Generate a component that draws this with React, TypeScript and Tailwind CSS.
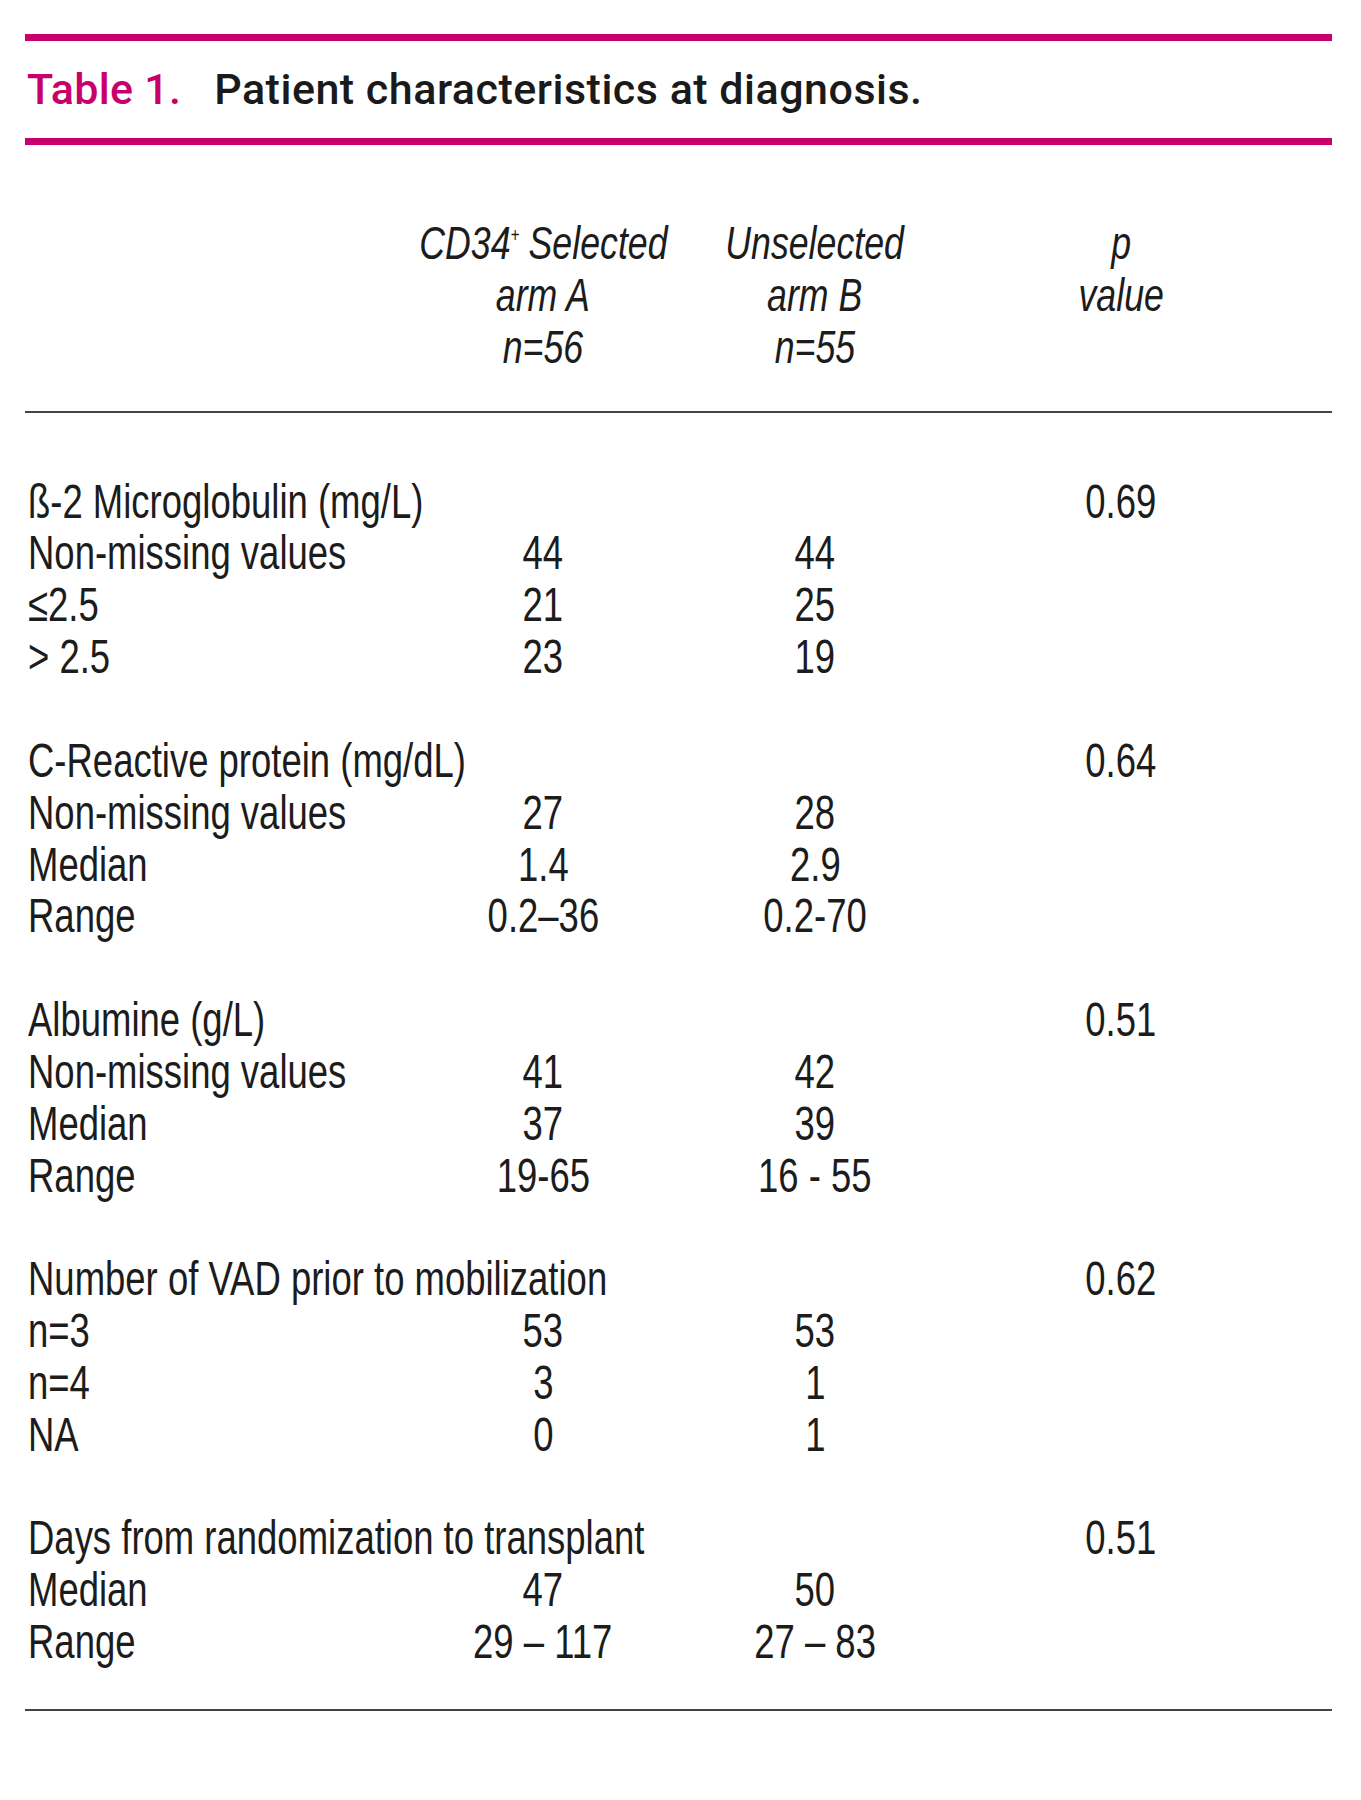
import React from "react";

type Group = { title: string; p: string; rows: [string, string, string][] };

const groups: Group[] = [
  {
    title: "ß-2 Microglobulin (mg/L)",
    p: "0.69",
    rows: [
      ["Non-missing values", "44", "44"],
      ["≤2.5", "21", "25"],
      ["> 2.5", "23", "19"],
    ],
  },
  {
    title: "C-Reactive protein (mg/dL)",
    p: "0.64",
    rows: [
      ["Non-missing values", "27", "28"],
      ["Median", "1.4", "2.9"],
      ["Range", "0.2–36", "0.2-70"],
    ],
  },
  {
    title: "Albumine (g/L)",
    p: "0.51",
    rows: [
      ["Non-missing values", "41", "42"],
      ["Median", "37", "39"],
      ["Range", "19-65", "16 - 55"],
    ],
  },
  {
    title: "Number of VAD prior to mobilization",
    p: "0.62",
    rows: [
      ["n=3", "53", "53"],
      ["n=4", "3", "1"],
      ["NA", "0", "1"],
    ],
  },
  {
    title: "Days from randomization to transplant",
    p: "0.51",
    rows: [
      ["Median", "47", "50"],
      ["Range", "29 – 117", "27 – 83"],
    ],
  },
];

const grid = "grid grid-cols-[375px_286px_258px_354px]";
const cell = "flex items-center justify-center whitespace-nowrap";

function C({ children }: { children: React.ReactNode }) {
  return <span className="inline-block scale-x-[0.76] whitespace-pre">{children}</span>;
}

function L({ children }: { children: React.ReactNode }) {
  return <span className="inline-block scale-x-[0.76] origin-left">{children}</span>;
}

export default function App() {
  return (
    <div className="w-[1361px] min-h-[1800px] bg-white text-[#1c1c1c]">
      <div className="pl-[25px] pr-[29px] pt-[34px]">
        <div className="h-[7px] bg-[#c8006c]" />
        <div className="h-[97px] flex items-center pl-[2px] font-['Roboto','Liberation_Sans',sans-serif] font-medium text-[43px] leading-none whitespace-nowrap">
          <span className="text-[#c8006c] tracking-[0.3px]">Table 1.</span>
          <span className="ml-[33px] tracking-[0.5px] text-[#1a1a1a]">Patient characteristics at diagnosis.</span>
        </div>
        <div className="h-[7px] bg-[#c8006c]" />

        <div className="pt-[72px] font-['Liberation_Sans','Arial',sans-serif] text-[47px] italic leading-[52px]">
          <div className={`${grid} h-[52px]`}>
            <div />
            <div className={cell}>
              <C>
                CD34<sup className="text-[20px] -top-[17px] mr-[12px]">+</sup>Selected
              </C>
            </div>
            <div className={cell}>
              <C>Unselected</C>
            </div>
            <div className={cell}>
              <C>p</C>
            </div>
          </div>
          <div className={`${grid} h-[52px]`}>
            <div />
            <div className={cell}>
              <C>arm A</C>
            </div>
            <div className={cell}>
              <C>arm B</C>
            </div>
            <div className={cell}>
              <C>value</C>
            </div>
          </div>
          <div className={`${grid} h-[52px]`}>
            <div />
            <div className={cell}>
              <C>n=56</C>
            </div>
            <div className={cell}>
              <C>n=55</C>
            </div>
            <div />
          </div>
        </div>

        <div className="mt-[38px] h-[2px] bg-[#444]" />

        <div className="pt-[62.6px] font-['Liberation_Sans','Arial',sans-serif] text-[48px] leading-[51.85px]">
          {groups.map((g, gi) => (
            <div key={gi} className={gi > 0 ? "mt-[51.85px]" : ""}>
              <div className={`${grid} h-[51.85px]`}>
                <div className="col-span-3 flex items-center pl-[3px] whitespace-nowrap">
                  <L>{g.title}</L>
                </div>
                <div className={cell}>
                  <C>{g.p}</C>
                </div>
              </div>
              {g.rows.map((r, ri) => (
                <div key={ri} className={`${grid} h-[51.85px]`}>
                  <div className="flex items-center pl-[3px] whitespace-nowrap">
                    <L>{r[0]}</L>
                  </div>
                  <div className={cell}>
                    <C>{r[1]}</C>
                  </div>
                  <div className={cell}>
                    <C>{r[2]}</C>
                  </div>
                  <div />
                </div>
              ))}
            </div>
          ))}
        </div>

        <div className="mt-[41px] h-[2px] bg-[#444]" />
      </div>
    </div>
  );
}
